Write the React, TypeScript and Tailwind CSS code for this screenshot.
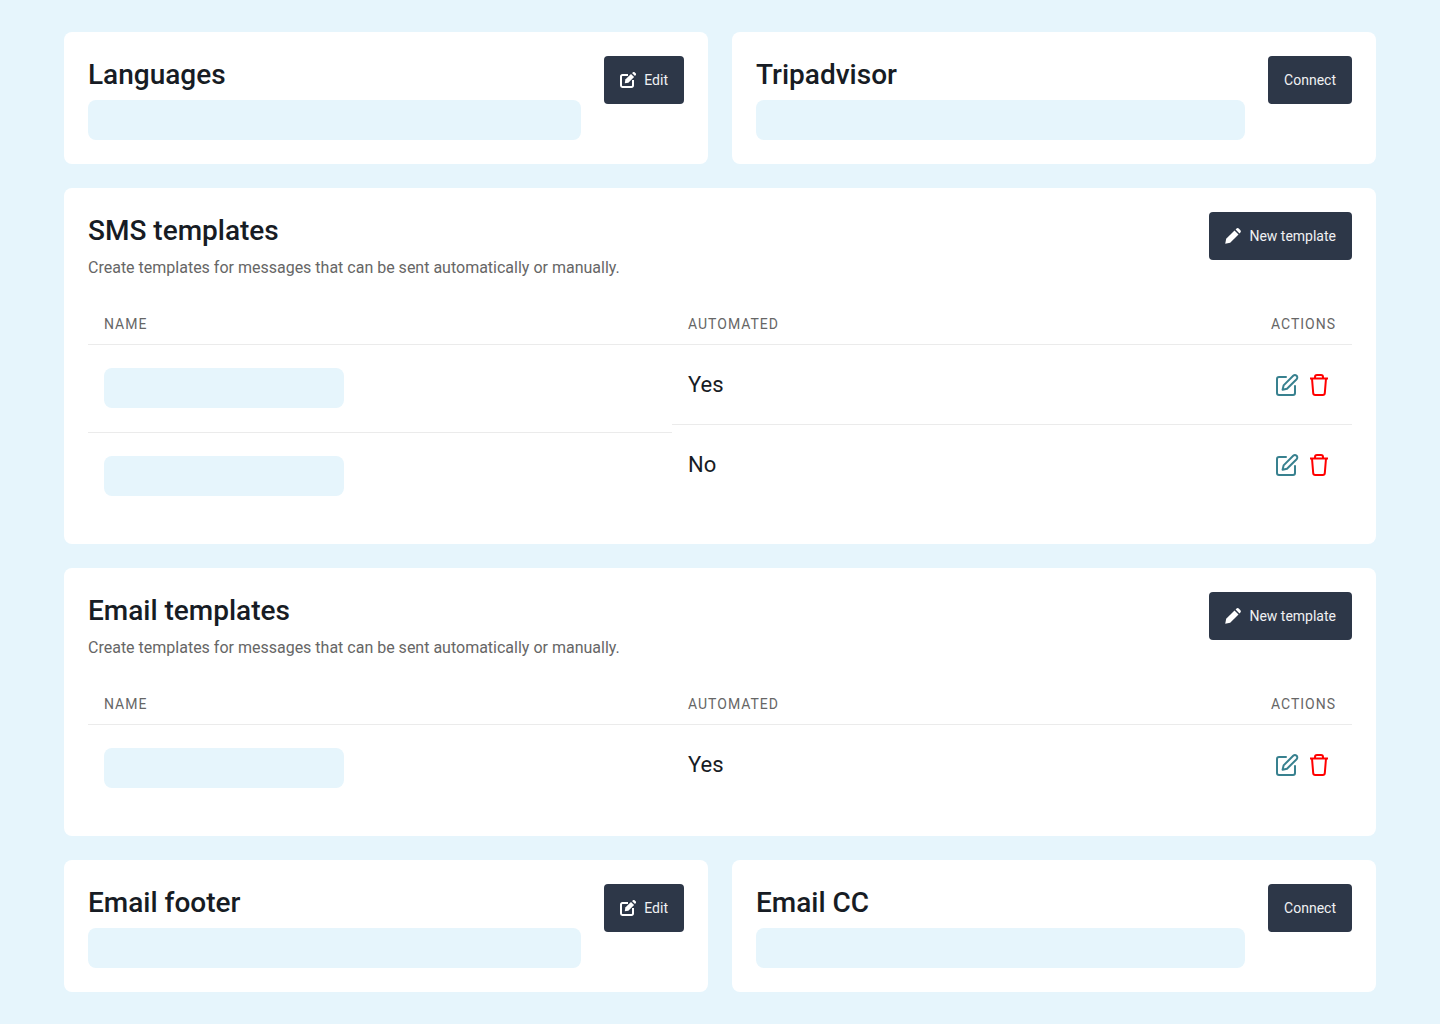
function Placeholder({ className }: { className: string }) {
  return <div className={`h-10 rounded-lg bg-[#e6f5fc] ${className}`} />;
}

function DarkButton({ children }: { children: React.ReactNode }) {
  return (
    <button className="flex h-12 shrink-0 items-center gap-2 rounded bg-[#2d3748] px-4 text-sm text-[#f0f1f3]">
      {children}
    </button>
  );
}

function EditIcon() {
  return (
    <svg className="size-4 text-white" viewBox="0 0 16 16" fill="none">
      <path d="M8 3H2.4A1.4 1.4 0 0 0 1 4.4v9.2A1.4 1.4 0 0 0 2.4 15h9.2a1.4 1.4 0 0 0 1.4-1.4V8" stroke="currentColor" strokeWidth="2" />
      <path d="M4.8 11.2l.5-3.6 5.7-5.7 3.1 3.1-5.7 5.7z" fill="currentColor" />
      <path d="M12 1l.8-.6a1.4 1.4 0 0 1 2 0l.8.8a1.4 1.4 0 0 1 0 2l-.6.8z" fill="currentColor" />
    </svg>
  );
}

function PencilIcon() {
  return (
    <svg className="size-4 text-white" viewBox="0 0 16 16" fill="currentColor">
      <path d="M.2 15.8l1-5 8.3-8.3 4 4-8.3 8.3z" />
      <path d="M10.6 1.5l.7-.7a1.9 1.9 0 0 1 2.7 0l1.2 1.2a1.9 1.9 0 0 1 0 2.7l-.7.7z" />
    </svg>
  );
}

function SmallCard({ title, action }: { title: string; action: 'edit' | 'connect' }) {
  return (
    <div className="flex gap-[23px] rounded-lg bg-white p-6">
      <div className="flex-1">
        <h2 className="text-[28px] leading-[38px] font-medium text-[#171c24]">{title}</h2>
        <Placeholder className="mt-1.5" />
      </div>
      {action === 'edit' ? (
        <DarkButton>
          <EditIcon />
          Edit
        </DarkButton>
      ) : (
        <DarkButton>Connect</DarkButton>
      )}
    </div>
  );
}

function RowActions() {
  return (
    <div className="flex items-center gap-2 pr-[5px]">
      {/* edit */}
      <svg className="size-6 text-[#38818f]" viewBox="0 0 24 24" fill="none" stroke="currentColor" strokeWidth="2" strokeLinecap="round" strokeLinejoin="round">
        <path d="M11 4H4a2 2 0 0 0-2 2v14a2 2 0 0 0 2 2h14a2 2 0 0 0 2-2v-7" />
        <path d="M18.2 2.8a2.4 2.4 0 0 1 3.4 3.4L12 15.8l-4.4 1 1-4.4z" />
      </svg>
      {/* trash */}
      <svg className="size-6 text-[#ff0000]" viewBox="0 0 24 24" fill="none" stroke="currentColor" strokeWidth="2" strokeLinejoin="round">
        <path d="M3 5.5h18" />
        <path d="M8 5.5V4a2 2 0 0 1 2-2h4a2 2 0 0 1 2 2v1.5" />
        <path d="M5 5.5l1.2 14.7a2 2 0 0 0 2 1.8h7.6a2 2 0 0 0 2-1.8L19 5.5" />
      </svg>
    </div>
  );
}

function TemplatesCard({ title, rows }: { title: string; rows: string[] }) {
  return (
    <div className="rounded-lg bg-white p-6">
      <div className="flex justify-between">
        <div>
          <h2 className="text-[28px] leading-[38px] font-medium text-[#171c24]">{title}</h2>
          <p className="mt-1.5 text-base leading-6 text-[#666666]">
            Create templates for messages that can be sent automatically or manually.
          </p>
        </div>
        <DarkButton>
          <PencilIcon />
          New template
        </DarkButton>
      </div>
      <div className="mt-6 flex">
        <div className="w-[584px]">
          <div className="h-[41px] border-b border-[#ebebeb] px-4 pt-[11px] text-sm leading-[18px] tracking-[1px] text-[#666666]">NAME</div>
          {rows.map((row, i) => (
            <div key={row} className={`px-4 pt-[23px] pb-6 ${i < rows.length - 1 ? 'border-b border-[#ebebeb]' : ''}`}>
              <Placeholder className="w-60" />
            </div>
          ))}
        </div>
        <div className="flex-1">
          <div className="flex h-[41px] justify-between border-b border-[#ebebeb] px-4 pt-[11px] text-sm leading-[18px] tracking-[1px] text-[#666666]">
            <span>AUTOMATED</span>
            <span>ACTIONS</span>
          </div>
          {rows.map((row, i) => (
            <div key={row} className={`flex h-20 items-center justify-between px-4 ${i < rows.length - 1 ? 'border-b border-[#ebebeb]' : ''}`}>
              <span className="text-[22px] leading-8 text-[#171c24]">{row}</span>
              <RowActions />
            </div>
          ))}
        </div>
      </div>
    </div>
  );
}

export default function App() {
  return (
    <div className="flex min-h-screen flex-col gap-6 bg-[#e6f5fc] px-16 py-8 font-['Roboto',sans-serif]">
      <div className="grid grid-cols-2 gap-6">
        <SmallCard title="Languages" action="edit" />
        <SmallCard title="Tripadvisor" action="connect" />
      </div>
      <TemplatesCard title="SMS templates" rows={['Yes', 'No']} />
      <TemplatesCard title="Email templates" rows={['Yes']} />
      <div className="grid grid-cols-2 gap-6">
        <SmallCard title="Email footer" action="edit" />
        <SmallCard title="Email CC" action="connect" />
      </div>
    </div>
  );
}
